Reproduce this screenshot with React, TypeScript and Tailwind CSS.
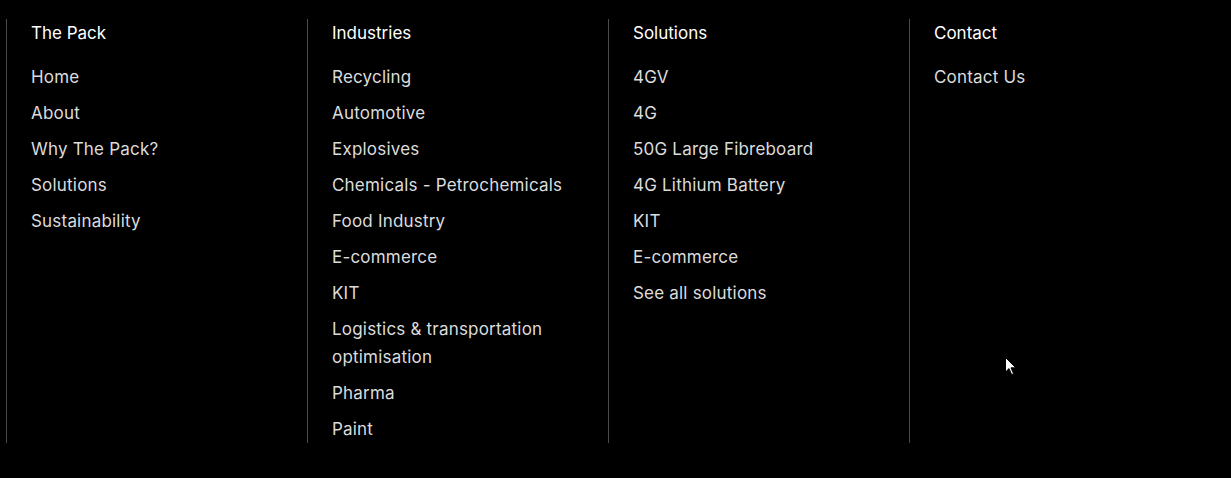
const COLUMNS: { title: string; links: string[] }[] = [
  { title: "The Pack", links: ["Home", "About", "Why The Pack?", "Solutions", "Sustainability"] },
  {
    title: "Industries",
    links: [
      "Recycling",
      "Automotive",
      "Explosives",
      "Chemicals - Petrochemicals",
      "Food Industry",
      "E-commerce",
      "KIT",
      "Logistics & transportation optimisation",
      "Pharma",
      "Paint",
    ],
  },
  {
    title: "Solutions",
    links: ["4GV", "4G", "50G Large Fibreboard", "4G Lithium Battery", "KIT", "E-commerce", "See all solutions"],
  },
  { title: "Contact", links: ["Contact Us"] },
];

function Cursor() {
  return (
    <svg className="absolute left-[1005px] top-[357px]" width="12" height="19" viewBox="0 0 12 19">
      <path d="M0.5 0.5 L0.5 15 L4 11.6 L6.6 17.6 L8.6 16.7 L6 10.8 L10.8 10.8 Z" fill="#fff" stroke="#000" strokeWidth="1" />
    </svg>
  );
}

export default function App() {
  return (
    <div className="relative w-[1231px] h-[478px] bg-black overflow-hidden" style={{ fontFamily: "Inter, 'Noto Sans', sans-serif" }}>
      <div className="flex pl-[6px] pt-[19px]">
        {COLUMNS.map((col) => (
          <div key={col.title} className="w-[301px] border-l border-[#4a4a4a] pl-6 pr-6">
            <h3 className="text-[17px] leading-[28px] text-white">{col.title}</h3>
            <ul className="mt-4 flex flex-col gap-2">
              {col.links.map((link) => (
                <li key={link} className="text-[17px] leading-[28px] tracking-[0.2px] text-[#dcdcdc]">
                  {link}
                </li>
              ))}
            </ul>
          </div>
        ))}
      </div>
      <Cursor />
    </div>
  );
}
